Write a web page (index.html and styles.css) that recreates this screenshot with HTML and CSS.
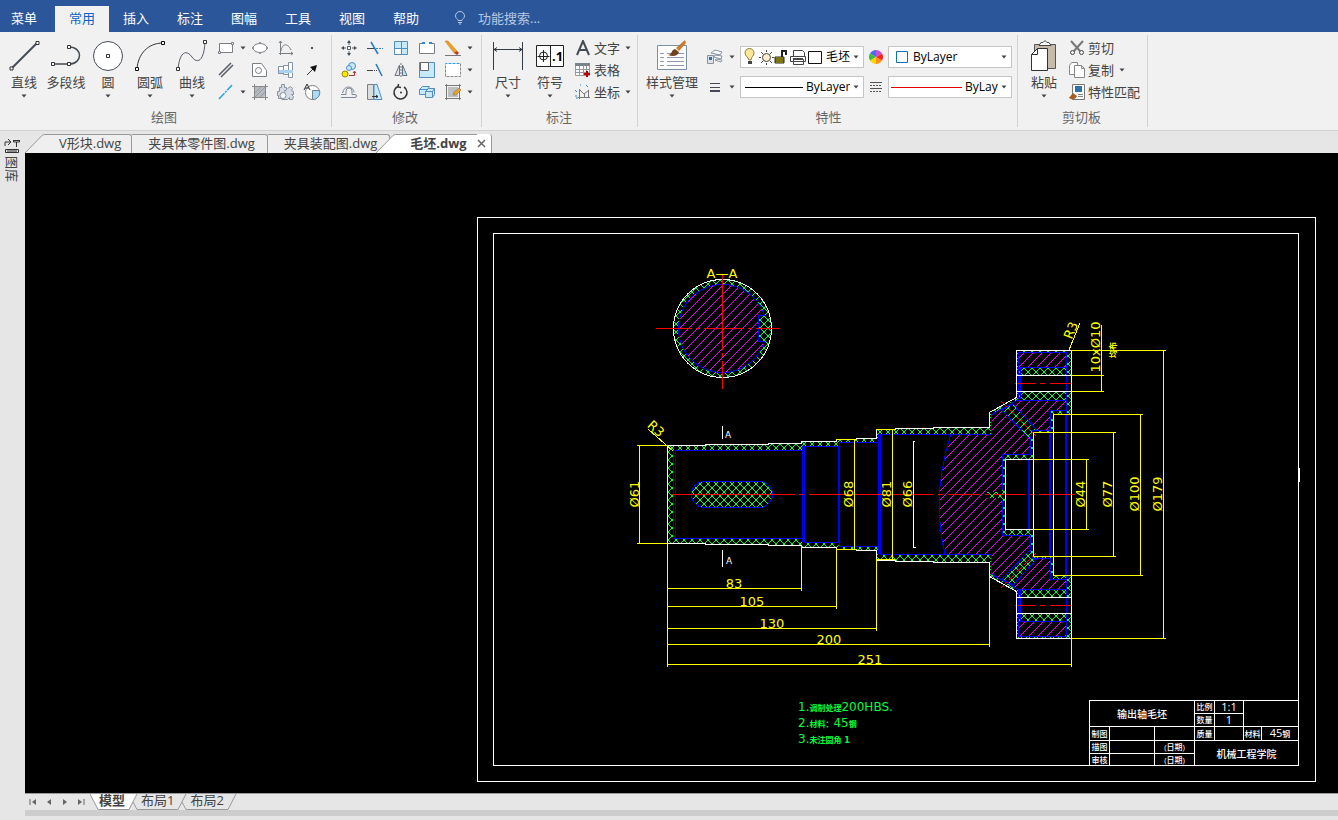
FILE: index.html
```html
<!DOCTYPE html>
<html lang="zh-CN">
<head>
    <meta charset="UTF-8">
    <meta name="viewport" content="width=device-width, initial-scale=1.0">
    <title>毛坯.dwg</title>
    <link rel="stylesheet" href="styles.css">
</head>
<body>
    <svg class="defs" aria-hidden="true">
        <symbol id="arrow" viewBox="0 0 6 4"><path d="M0.5 0.5h5L3 3.5z" fill="#444"/></symbol>
        <symbol id="slant" viewBox="0 0 20 19"><path d="M0 19L17 1.500Q18 0.500 20 0.500V19z" fill="currentColor"/><path d="M0 19L17 1.500Q18 0.500 20 0.500" fill="none" stroke="#999"/></symbol>
    </svg>

    <header class="menu-bar">
        <nav class="menu-tabs">
            <button class="menu-main">菜单</button>
            <button class="active">常用</button>
            <button>插入</button>
            <button>标注</button>
            <button>图幅</button>
            <button>工具</button>
            <button>视图</button>
            <button>帮助</button>
        </nav>
        <label class="search">
            <svg width="12" height="14" viewBox="0 0 12 14" fill="none" stroke="#b9c8e2"><path d="M4 9.500C4 8 1.500 7.500 1.500 5a4.500 4.500 0 0 1 9 0C10.500 7.500 8 8 8 9.500zM4 11.500h4M5 13h2"/></svg>
            <input type="text" placeholder="功能搜索..." aria-label="功能搜索">
        </label>
    </header>

    <div class="ribbon">
        <section class="group group-draw">
            <div class="group-body">
                <button class="big"><svg width="32" height="32" viewBox="0 0 32 32"><path d="M4 28L29 3" stroke="#444b57" stroke-width="2"/><path d="M2 27h3v3h-3zM28 1.500h3v3h-3z" fill="#fff" stroke="#333"/></svg>直线<svg class="drop"><use href="#arrow"/></svg></button>
                <button class="big"><svg width="32" height="32" viewBox="0 0 32 32" fill="none" stroke="#444b57"><path d="M3 24h16M19 7c14 0 14 17 0 17" stroke-width="1.500"/><path d="M1.500 22.500h3v3h-3zM17.500 22.500h3v3h-3zM17.500 5.500h3v3h-3z" fill="#fff" stroke="#333"/></svg>多段线</button>
                <button class="big"><svg width="32" height="32" viewBox="0 0 32 32"><circle cx="16" cy="16" r="14.500" fill="#fff" stroke="#444b57"/><path d="M14.500 14.500h3v3h-3z" fill="#fff" stroke="#333"/></svg>圆<svg class="drop"><use href="#arrow"/></svg></button>
                <button class="big"><svg width="32" height="32" viewBox="0 0 32 32"><path d="M3 29C4 14 14 3 29 3" fill="none" stroke="#333"/><path d="M1.500 27.500h3v3h-3zM27.500 1.500h3v3h-3z" fill="#fff" stroke="#111"/></svg>圆弧<svg class="drop"><use href="#arrow"/></svg></button>
                <button class="big"><svg width="32" height="32" viewBox="0 0 32 32"><path d="M2 29C4 10 11 10 16 17S28 22 29 2" fill="none" stroke="#555c68"/><path d="M0.500 27.500h3v3h-3zM27.500 0.500h3v3h-3z" fill="#fff" stroke="#333"/></svg>曲线<svg class="drop"><use href="#arrow"/></svg></button>
                <div class="tools tools-draw">
                    <button aria-label="矩形"><svg width="18" height="18" viewBox="0 0 18 18" fill="#fff" stroke="#7a7f86"><path d="M2.500 4.500h13v9h-13z"/><path d="M1.500 12.500h2v2h-2zM14.500 3.500h2v2h-2z"/></svg></button>
                    <button aria-label="矩形选项"><svg class="drop"><use href="#arrow"/></svg></button>
                    <button aria-label="椭圆"><svg width="18" height="18" viewBox="0 0 18 18" fill="#fff" stroke="#7a7f86"><ellipse cx="9" cy="9" rx="7" ry="4.500"/><path d="M8.500 3.500h1v1h-1zM8.500 13.500h1v1h-1zM1.500 8.500h1v1h-1zM15.500 8.500h1v1h-1z"/></svg></button>
                    <button aria-label="公式曲线"><svg width="18" height="18" viewBox="0 0 18 18" fill="none" stroke="#7a7f86"><path d="M3.500 2v14M2 14.500h14M2 4l1.500-2L5 4M14 13l2 1.500-2 1.500M4 12C5 5 10 3 14 11"/></svg></button>
                    <button aria-label="点"><svg width="18" height="18" viewBox="0 0 18 18"><path d="M8 8h2v2h-2z" fill="#555"/></svg></button>
                    <button aria-label="平行线"><svg width="18" height="18" viewBox="0 0 18 18" stroke="#555c68" stroke-width="1.500"><path d="M2 14L14 2M4 16L16 4"/></svg></button>
                    <span></span>
                    <button aria-label="多边形孔"><svg width="18" height="18" viewBox="0 0 18 18" fill="#fff" stroke="#7a7f86"><path d="M1.500 2.500h9l5 7v6h-14z"/><circle cx="7.500" cy="9.500" r="3"/></svg></button>
                    <button aria-label="轴"><svg width="18" height="18" viewBox="0 0 18 18" stroke="#8492a5"><path d="M1.500 5.500h5v7h-5zM6.500 4.500h5v9h-5zM11.500 1.500h4v15h-4z" fill="#fff"/><path d="M2 9h14v3h-14z" fill="#a8d0f0" stroke="none"/></svg></button>
                    <button aria-label="箭头"><svg width="18" height="18" viewBox="0 0 18 18"><path d="M4 14L10 8" stroke="#333"/><path d="M14 4L12 11 7 6z" fill="#111"/></svg></button>
                    <button aria-label="中心线"><svg width="18" height="18" viewBox="0 0 18 18"><path d="M2 16L15 2" stroke="#23a5e0" stroke-width="1.500" stroke-dasharray="8 1 2 1"/></svg></button>
                    <button aria-label="中心线选项"><svg class="drop"><use href="#arrow"/></svg></button>
                    <button aria-label="剖面线"><svg width="18" height="18" viewBox="0 0 18 18"><path d="M3 3h12v9l-3 3H3z" fill="#b6bbc1"/><path d="M1 3.500h16M1 14.500h16M3.500 1v16M14.500 1v16" fill="none" stroke="#888"/><path d="M4 10l6-6M4 14L14 4M9 14l5-5" stroke="#969ba1"/></svg></button>
                    <button aria-label="齿轮"><svg width="18" height="18" viewBox="0 0 18 18" fill="#d5dae4" stroke="#8a92a1"><path d="M2.500 4.500h2v-3h3v3h2v3h-2l1 3-3 5h-4v-3h-1v-4h2z"/><path d="M10.500 5.500l3-2 2 2-1 2 2 1v3h-2l2 2-1 3h-3v-2l-2 2h-6"/><circle cx="6" cy="12.500" r="3" fill="#fff"/></svg></button>
                    <button aria-label="局部放大"><svg width="18" height="18" viewBox="0 0 18 18" stroke="#7a7f86"><circle cx="9.500" cy="9.500" r="7" fill="#fff"/><path d="M9.500 7.500h7a7 7 0 0 1-7 9z" fill="#a5dcf7"/><path d="M1 7l3-6 3 6M2 5h4" fill="none" stroke="#333"/></svg></button>
                </div>
            </div>
            <h2>绘图</h2>
        </section>

        <section class="group group-modify">
            <div class="group-body">
                <div class="tools tools-modify">
                    <button aria-label="平移"><svg width="18" height="18" viewBox="0 0 18 18" fill="none" stroke="#555c68"><path d="M7.500 7.500h3v3h-3z"/><path d="M9 3v3M9 12v3M3 9h3M12 9h3"/><path d="M7 4l2-3 2 3zM7 14l2 3 2-3zM4 7L1 9l3 2zM14 7l3 2-3 2z" fill="#444b57" stroke="none"/></svg></button>
                    <button aria-label="裁剪"><svg width="18" height="18" viewBox="0 0 18 18"><path d="M1 9.500h8" stroke="#444"/><path d="M10 9.500h7" stroke="#2f86d6" stroke-dasharray="2 1"/><path d="M5 3L12 15" stroke="#2878c8" stroke-width="1.500"/></svg></button>
                    <button aria-label="阵列"><svg width="18" height="18" viewBox="0 0 18 18" fill="#c6e9fb" stroke="#568dbd"><path d="M2.500 2.500h13v13h-13zM9.500 2.500v13M2.500 9.500h13"/><path d="M3 10h6v5H3z" fill="#fff" stroke="none"/></svg></button>
                    <button aria-label="打断"><svg width="18" height="18" viewBox="0 0 18 18" fill="#fff" stroke="#7a7f86"><path d="M6 4.500H1.500v10h15v-10H12"/><path d="M4 4h3M11 4h3" stroke="#2f86d6" stroke-width="2"/></svg></button>
                    <button aria-label="删除"><svg width="18" height="18" viewBox="0 0 18 18"><path d="M1 2l3 0 9 10-3 2z" fill="#f0a020" stroke="#b87b1a" stroke-width=".5"/><path d="M10 14l3-2 2 2-2 2z" fill="#b53b28"/><path d="M1 16.500h16" stroke="#777"/></svg></button>
                    <button aria-label="删除选项"><svg class="drop"><use href="#arrow"/></svg></button>
                    <button aria-label="平移复制"><svg width="18" height="18" viewBox="0 0 18 18"><circle cx="5" cy="13" r="3" fill="#ffe800" stroke="#a08a00"/><circle cx="12" cy="5" r="3.500" fill="#c6e9fb" stroke="#568dbd"/><circle cx="9" cy="7" r="2.500" fill="#c6e9fb" stroke="#568dbd"/><path d="M9 14.500h5.500V11M13 12l1.500-2 1.500 2" fill="none" stroke="#b0352c"/></svg></button>
                    <button aria-label="延伸"><svg width="18" height="18" viewBox="0 0 18 18"><path d="M1 9.500h6" stroke="#444"/><path d="M8 9.500h4" stroke="#444" stroke-dasharray="1 1"/><path d="M10 3L16 15" stroke="#2878c8" stroke-width="1.500"/></svg></button>
                    <button aria-label="镜像"><svg width="18" height="18" viewBox="0 0 18 18" stroke="#6a737e"><path d="M7.500 4v10.500H3z" fill="#e2e4e8"/><path d="M10.500 4v10.500H15z" fill="#b5e1f7"/><path d="M9 2v15" stroke-dasharray="2 1"/></svg></button>
                    <button aria-label="缩放"><svg width="18" height="18" viewBox="0 0 18 18" stroke="#568dbd"><path d="M1.500 1.500h15v15h-15z" fill="#c6e9fb"/><path d="M2.500 1.500h8v8h-8z" fill="#fff" stroke="#666"/></svg></button>
                    <button aria-label="拉伸"><svg width="18" height="18" viewBox="0 0 18 18"><path d="M1.500 2.500h15v13h-15z" fill="#fff" stroke="#fff"/><path d="M16.500 2.500v13H1.500" fill="none" stroke="#888" stroke-dasharray="3 1"/><path d="M1.500 15.500V2.500h15" fill="none" stroke="#2f9be0" stroke-dasharray="3 1"/></svg></button>
                    <button aria-label="拉伸选项"><svg class="drop"><use href="#arrow"/></svg></button>
                    <button aria-label="等距"><svg width="18" height="18" viewBox="0 0 18 18" fill="none" stroke="#7c8896"><path d="M1 11.500h5V8a1 1 0 0 1 6 0v3.500h3a1 1 0 0 1 0 3H1M2 9.500h1a5 5 0 1 1 11 0"/></svg></button>
                    <button aria-label="倒角"><svg width="18" height="18" viewBox="0 0 18 18"><path d="M1.500 1.500h6v15h-6z" fill="#ddd" stroke="#7a7f86"/><path d="M8 1.500h3l5 15H8z" fill="#c6e9fb" stroke="#568dbd"/><path d="M6 13.500h6M10 12l2 1.500-2 1.500" fill="none" stroke="#333"/></svg></button>
                    <button aria-label="旋转"><svg width="18" height="18" viewBox="0 0 18 18"><path d="M6 3.500A6.500 6.500 0 1 0 12 4M6.500 1l-.5 3 3 .5" fill="none" stroke="#333" stroke-width="1.500"/><circle cx="9" cy="9.500" r="1" fill="#333"/></svg></button>
                    <button aria-label="块"><svg width="18" height="18" viewBox="0 0 18 18" fill="#c6e9fb" stroke="#568dbd"><path d="M1.500 6.500l3-3h7l-2 3v5h-8zM9.500 6.500h-8"/><path d="M7.500 8.500l3-3h6v6l-2 3h-7zM7.500 8.500h7v6M14.500 8.500l2-3"/></svg></button>
                    <button aria-label="填充编辑"><svg width="18" height="18" viewBox="0 0 18 18"><path d="M4 4h10v10H4z" fill="#bbc0c5"/><path d="M1 2.500h16M1 15.500h16M2.500 1v16M15.500 1v16" stroke="#777"/><path d="M9 12l1-3 5-4 2 2-5 5z" fill="#e5a235" stroke="#94651d" stroke-width=".5"/></svg></button>
                    <button aria-label="填充选项"><svg class="drop"><use href="#arrow"/></svg></button>
                </div>
            </div>
            <h2>修改</h2>
        </section>

        <section class="group group-dim">
            <div class="group-body">
                <button class="big"><svg width="32" height="32" viewBox="0 0 32 32" stroke="#333b46" fill="none"><path d="M1.500 2v28M30.500 2v28M2 9.500h28M5 7.500L2 9.500l3 2M27 7.500l3 2-3 2"/></svg>尺寸<svg class="drop"><use href="#arrow"/></svg></button>
                <button class="big"><svg width="32" height="32" viewBox="0 0 32 32"><path d="M2.500 5.500h27v21h-27zM16.500 5.500v21" fill="#fff" stroke="#222"/><circle cx="9.500" cy="16" r="4" fill="none" stroke="#222"/><path d="M9.500 10v12M3.500 16.500h12" stroke="#222"/><text x="18" y="21" class="icon-text">.1</text></svg>符号<svg class="drop"><use href="#arrow"/></svg></button>
                <div class="list">
                    <button><svg width="16" height="16" viewBox="0 0 16 16"><path d="M2 15L8 1l6 14M4 10h8" fill="none" stroke="#444b57" stroke-width="2"/></svg>文字<svg class="drop"><use href="#arrow"/></svg></button>
                    <button><svg width="16" height="16" viewBox="0 0 16 16"><path d="M0.500 1.500h14v12h-14zM0.500 7.500h14M0.500 10.500h14M4.500 4v9M8.500 4v9M11.500 4v9" fill="#fff" stroke="#999"/><path d="M0 1h15v3H0z" fill="#7b838d"/><path d="M12 9v6M9 12h6" stroke="#c00000" stroke-width="2"/></svg>表格</button>
                    <button><svg width="16" height="16" viewBox="0 0 16 16" fill="none" stroke="#777"><path d="M4.500 5v10M3 13.500h12M5 6l4 4 5-4M9.500 10v4M13.500 6v8"/><path d="M5 1h1M11 1l2 2M0 6l2 2M0 12h2M1 14h2" stroke="#2f86d6"/></svg>坐标<svg class="drop"><use href="#arrow"/></svg></button>
                </div>
            </div>
            <h2>标注</h2>
        </section>

        <section class="group group-props">
            <div class="group-body">
                <button class="big wide"><svg width="32" height="32" viewBox="0 0 32 32"><path d="M1.500 5.500h29v24h-29z" fill="#fff" stroke="#7891a3"/><path d="M4 13.500h4M4 17.500h4M4 21.500h4M4 25.500h4M11 13.500h17M11 17.500h17M11 21.500h17M11 25.500h17" stroke="#8c99b0"/><path d="M20 8l9-8 1 3-7 8z" fill="#c97a2b"/><path d="M12 15c4 0 3-5 7-6l4 3c-1 4-6 5-11 3z" fill="#74421c"/></svg>样式管理<svg class="drop"><use href="#arrow"/></svg></button>
                <div class="props">
                    <button aria-label="图层"><svg width="16" height="18" viewBox="0 0 16 18" stroke="#8794a2"><path d="M4 5l4-3 7 2-2 3zM7 9l1-2 7 1-1 3zM8 12l1-1 6 1-1 2z" fill="#fff"/><path d="M0.500 7.500h6v8h-6z" fill="#dce1e7"/><path d="M2 9h3v3H2z" fill="#2d6fa8" stroke="none"/></svg></button>
                    <button aria-label="图层选项"><svg class="drop"><use href="#arrow"/></svg></button>
                    <div class="combo">
                        <svg width="80" height="18" viewBox="0 0 80 18" stroke="#444">
                            <path d="M6 12C5 9 2 8 2 5a4 4 0 0 1 9 0c0 3-3 4-3 7z" fill="#ffe79a" stroke="#8f7c38"/><path d="M5 13h4v3H5z" fill="#444" stroke="none"/>
                            <circle cx="23.500" cy="9.500" r="4" fill="#fff0d0"/><path d="M23.500 2v2M23.500 15v2M16 9.500h2M29 9.500h2M18 4l2 2M27 13l2 2M18 15l2-2M27 6l2-2"/>
                            <path d="M32 9h9v6h-9z" fill="#d7c900" stroke="#222"/><path d="M32 11h9M32 13h9" stroke="#222"/><path d="M39 9V3h4v4" fill="none" stroke="#222" stroke-width="2"/>
                            <path d="M50.500 8V2.500h9l2 2V8M47.500 8.500h15v5h-15zM50.500 11.500h10v5h-10z" fill="#fff"/><path d="M50 11h10" stroke-width="2"/>
                            <path d="M65.500 3.500h13v12h-13z" fill="#fff" stroke="#111"/>
                        </svg>
                        <select class="cut" aria-label="当前图层"><option>毛坯</option></select>
                        <svg class="drop"><use href="#arrow"/></svg>
                    </div>
                    <button aria-label="颜色"><svg width="14" height="14" viewBox="0 0 14 14"><path d="M7 7V0a7 7 0 0 1 6 3.500z" fill="#c850d8"/><path d="M7 7l6-3.500a7 7 0 0 1 0 7z" fill="#ff2020"/><path d="M7 7l6 3.500A7 7 0 0 1 7 14z" fill="#ff9018"/><path d="M7 7v7a7 7 0 0 1-6-3.500z" fill="#ffd700"/><path d="M7 7l-6 3.500a7 7 0 0 1 0-7z" fill="#3dbb3d"/><path d="M7 7L1 3.500A7 7 0 0 1 7 0z" fill="#4b6ee8"/></svg></button>
                    <div class="combo">
                        <svg width="19" height="14" viewBox="0 0 19 14"><path d="M5.500 1.500h11v11h-11z" fill="#fff" stroke="#0a70c8"/></svg>
                        <select aria-label="颜色"><option>ByLayer</option></select>
                        <svg class="drop"><use href="#arrow"/></svg>
                    </div>
                    <button aria-label="线宽"><svg width="16" height="14" viewBox="0 0 16 14" stroke="#444b57"><path d="M3 3.500h10M3 7.500h10" /><path d="M3 11h10" stroke-width="2"/></svg></button>
                    <button aria-label="线宽选项"><svg class="drop"><use href="#arrow"/></svg></button>
                    <div class="combo">
                        <svg width="60" height="14" viewBox="0 0 60 14"><path d="M2 7.500h58" stroke="#000"/></svg>
                        <select aria-label="线宽"><option>ByLayer</option></select>
                        <svg class="drop"><use href="#arrow"/></svg>
                    </div>
                    <button aria-label="线型"><svg width="14" height="14" viewBox="0 0 14 14" stroke="#555"><path d="M1 2.500h12M1 8.500h12"/><path d="M1 5.500h12M1 11.500h12" stroke-dasharray="2 1"/></svg></button>
                    <div class="combo">
                        <svg width="71" height="14" viewBox="0 0 71 14"><path d="M0 7.500h71" stroke="#e00000"/></svg>
                        <select class="cut" aria-label="线型"><option>ByLayer</option></select>
                        <svg class="drop"><use href="#arrow"/></svg>
                    </div>
                </div>
            </div>
            <h2>特性</h2>
        </section>

        <section class="group group-clip">
            <div class="group-body">
                <button class="big"><svg width="32" height="32" viewBox="0 0 32 32"><path d="M6.500 4.500h21v24h-21z" fill="#c6bbaa" stroke="#555"/><path d="M11 5.500h12l-2-3h-2l-2-2-2 2h-2z" fill="#fff" stroke="#444"/><path d="M3.500 14.500l6-6h10v22h-16z" fill="#fff" stroke="#333"/><path d="M3.500 14.500h6v-6" fill="none" stroke="#333"/></svg>粘贴<svg class="drop"><use href="#arrow"/></svg></button>
                <div class="list">
                    <button><svg width="16" height="16" viewBox="0 0 16 16" fill="none"><path d="M2 1l9 10M14 1L5 11" stroke="#777" stroke-width="2"/><circle cx="3.500" cy="12.500" r="2" stroke="#444"/><circle cx="12.500" cy="12.500" r="2" stroke="#444"/></svg>剪切</button>
                    <button><svg width="16" height="16" viewBox="0 0 16 16" fill="#fff" stroke="#888"><path d="M0.500 3.500l2-3h6v12h-8z"/><path d="M5.500 3.500h7l3 3v9h-10zM12.500 3.500v3h3"/></svg>复制<svg class="drop"><use href="#arrow"/></svg></button>
                    <button><svg width="16" height="16" viewBox="0 0 16 16"><path d="M3.500 0.500h12v15h-12z" fill="#fff" stroke="#777"/><path d="M6 2h7v6H6z" fill="#2f73ad"/><path d="M9 10.500h5M9 12.500h5" stroke="#888"/><path d="M0 14l4-5 4 3c-2 4-5 4-8 2z" fill="#a65b20"/></svg>特性匹配</button>
                </div>
            </div>
            <h2>剪切板</h2>
        </section>
    </div>

    <div class="workspace">
        <aside class="side">
            <button class="side-tab"><svg width="16" height="16" viewBox="0 0 16 16" fill="none" stroke="#333"><path d="M1 8V4h5M4 1l3 3-3 3M9.500 2.500h6M9.500 2v2h6V2M12.500 4v5M1.500 11.500h13v3h-13zM3 13h10"/></svg><span>图库</span></button>
        </aside>
        <div class="main">
            <nav class="doc-tabs">
                <button class="slanted"><svg width="20" height="19"><use href="#slant"/></svg><span class="doc-name short">V形块.dwg</span></button>
                <button><span class="doc-name">夹具体零件图.dwg</span></button>
                <button><span class="doc-name">夹具装配图.dwg</span></button>
                <button class="slanted current"><svg width="20" height="19"><use href="#slant"/></svg><span class="doc-name short">毛坯.dwg</span><svg class="close" width="9" height="9" viewBox="0 0 9 9"><path d="M1 1l7 7M8 1L1 8" stroke="#666" stroke-width="1.500"/></svg></button>
            </nav>

            <main class="canvas">
                <svg class="drawing" viewBox="25 153 1313 640" role="img" aria-label="输出轴毛坯">
                    <defs>
                        <pattern id="steel" width="9" height="9" patternUnits="userSpaceOnUse"><path d="M-1 10L10 -1M-1 1L1 -1M8 10L10 8" stroke="#f0f"/></pattern>
                        <pattern id="stock" width="8" height="8" patternUnits="userSpaceOnUse"><path d="M-1 9L9 -1M-1 -1L9 9" stroke="#00ff3c"/></pattern>
                    </defs>

                    <!-- sheet frame -->
                    <g class="white">
                        <path d="M477.500 217.500h838v564h-838zM493.500 233.500h805v532h-805z"/>
                        <path d="M1299.500 468v14"/>
                    </g>

                    <!-- section A-A -->
                    <circle cx="722.500" cy="328.500" r="49" fill="url(#stock)"/>
                    <path class="cover" d="M764.500 315.500A44 44 0 1 0 764.500 341.500H758.500V315.500z"/>
                    <path class="blue" fill="url(#steel)" d="M764.500 315.500A44 44 0 1 0 764.500 341.500H758.500V315.500z"/>
                    <circle class="white" cx="722.500" cy="328.500" r="49"/>
                    <path class="red" d="M656 328.500h36M696 328.500h4M704 328.500h40M748 328.500h4M756 328.500h24M722.500 275v75M722.500 353v4M722.500 361v28"/>

                    <!-- blank: stock allowance, then the finished part over it -->
                    <path fill="url(#stock)" d="M667 445H705V444H768V443H801V441H836V439H856V438H876V429H895V428H933V427H989V412L1017 397V350H1071V638H1017V592L989 577V562H933V561H895V560H876V550H856V549H836V547H801V545H768V544H705V543H667z"/>
                    <path class="cover" d="M673 450H803V446H839V442H879V434H991V415L1018 400H1066V410H1050V430H1030V454H1002V535H1030V558H1050V579H1066V589H1018L991 574V554H879V546H839V542H803V538H673zM1018 352H1066V367H1018zM1018 621H1066V636H1018z"/>
                    <path class="blue" fill="url(#steel)" d="M951 434H991V415L1018 400H1066V410H1050V430H1030V454H1002V535H1030V558H1050V579H1066V589H1018L991 574V554H945Q931 495 951 434zM1018 352H1066V367H1018zM1018 621H1066V636H1018z"/>
                    <path class="cover" d="M1017 375H1071V391H1017zM1017 597H1071V613H1017zM1005 459H1033V432H1053V414H1071V575H1053V556H1033V529H1005z"/>
                    <path class="cover" d="M1002 410L1013 404L1037 430H1033L1030 439zM1002 579L1013 585L1037 559H1033L1030 550z"/>
                    <path class="blue" fill="url(#stock)" d="M1002 410L1013 404L1037 430H1033L1030 439zM1002 579L1013 585L1037 559H1033L1030 550z"/>
                    <path class="cover" d="M987 492h13l3-3v12l-3-3h-13z"/>
                    <path fill="url(#stock)" d="M987 492h13l3-3v12l-3-3h-13z"/>
                    <path class="blue" d="M673.500 450.500H802.500V538.500H673.500zM675.500 450v88M804.500 446.500H838.500V542.500H804.500zM802.500 446v96M839.500 442.500H878.500V546.500H839.500zM951 434.500H880.500V554.500H946M878.500 434v120M1018.500 352v47M1018.500 589v47M1020.500 367v32M1020.500 589v32M1066.500 352v62M1066.500 575v61"/>
                    <path class="blue thick" d="M1029 459v70M1050 432v124M1066 414v161"/>
                    <rect x="691.500" y="481.500" width="81" height="26" rx="13" class="blue" fill="url(#stock)"/>
                    <path class="red" d="M671 494.500h124M799 494.500h5M809 494.500h124M938 494.500h5M948 494.500h31M985 494.500h4M994 494.500h31M1030 494.500h5M1039 494.500h36M1015 383.500h21M1040 383.500h5M1050 383.500h21M1015 605.500h21M1040 605.500h5M1050 605.500h21"/>
                    <path class="red" stroke-dasharray="8 3" d="M1001 401L1036 436M1001 588L1036 553"/>
                    <path class="white" d="M667.500 543V445.500H705.500V444.500H768.500V443.500H801.500V441.500H836.500V439.500H856.500V438.500H876.500V429.500H895.500V428.500H933.500V427.500H989.500V412.500L1016.500 397.500V350.500H1071.500V638.500H1016.500V591.500L989.500 576.500V562.500H933.500V561.500H895.500V560.500H876.500V550.500H856.500V549.500H836.500V547.500H801.500V545.500H768.500V544.500H705.500V543.500H667.500"/>
                    <path class="white" d="M1017 375.500H1071M1017 391.500H1071M1017 597.500H1071M1017 613.500H1071M1071 414.500H1053.500V575.500H1071M1053 432.500H1033.500V556.500H1053M1033 459.500H1005.500V529.500H1033M722.500 426v13M722.500 550v17"/>

                    <!-- dimension lines -->
                    <path class="yellow" d="M637 445.500h31M637 543.500h31M639.500 445v98M667.500 543v124M667 588.500h134M801.500 545v46M667 606.500h169M836.500 549v60M667 628.500h209M876.500 560v71M667 644.500h322M989.500 577v70M667 664.500h404M1071.500 638v29"/>
                    <path class="yellow" d="M836 439.500h21M836 549.500h21M854.500 439v110M876 429.500h19M876 559.500h19M892.500 429v130"/>
                    <path class="white" d="M915 441.500h-1.500v106h2"/>
                    <path class="yellow" d="M1033 459.500h56M1033 529.500h56M1086.500 459v70M1033 432.500h83M1033 556.500h83M1113.500 432v124M1053 414.500h90M1053 575.500h90M1140.500 414v161M1071 350.500h95M1071 638.500h95M1163.500 350v288M1071 375.500h33M1071 391.500h33M1101.500 325v66M648 429L673 451M1080 323L1069 350"/>

                    <g class="label">
                        <text x="722" y="278">A—A</text>
                        <text x="734" y="588">83</text>
                        <text x="752" y="606">105</text>
                        <text x="772" y="628">130</text>
                        <text x="829" y="644">200</text>
                        <text x="870" y="664">251</text>
                        <text transform="translate(639 494) rotate(-90)">Ø61</text>
                        <text transform="translate(853 494) rotate(-90)">Ø68</text>
                        <text transform="translate(891 494) rotate(-90)">Ø81</text>
                        <text transform="translate(912 494) rotate(-90)">Ø66</text>
                        <text transform="translate(1085 494) rotate(-90)">Ø44</text>
                        <text transform="translate(1112 494) rotate(-90)">Ø77</text>
                        <text transform="translate(1139 494) rotate(-90)">Ø100</text>
                        <text transform="translate(1162 494) rotate(-90)">Ø179</text>
                        <text transform="translate(1100 347) rotate(-90)">10xØ10</text>
                        <text class="tiny" transform="translate(1116 350) rotate(-90)">均布</text>
                        <text transform="translate(653 432) rotate(42)">R3</text>
                        <text transform="translate(1075 332) rotate(-68)">R3</text>
                    </g>
                    <g class="mark">
                        <text x="725" y="438">A</text>
                        <text x="726" y="564">A</text>
                    </g>
                    <g class="notes">
                        <text x="798" y="711">1.<tspan class="tiny">调制处理</tspan>200HBS.</text>
                        <text x="798" y="727">2.<tspan class="tiny">材料：</tspan>45<tspan class="tiny">钢</tspan></text>
                        <text x="798" y="743">3.<tspan class="tiny">未注圆角 1</tspan></text>
                    </g>

                    <foreignObject x="1089" y="700" width="210" height="66">
                        <table class="title-block">
                            <colgroup><col class="c20"><col class="c45"><col class="c40"><col class="c20"><col class="c29"><col class="c18"><col class="c37"></colgroup>
                            <tr><td colspan="3" rowspan="2" class="name">输出轴毛坯</td><td>比例</td><td class="num">1:1</td><td colspan="2" rowspan="2"></td></tr>
                            <tr><td>数量</td><td class="num">1</td></tr>
                            <tr><td>制图</td><td></td><td></td><td>质量</td><td></td><td>材料</td><td><span class="num">45</span>钢</td></tr>
                            <tr><td>描图</td><td></td><td>(日期)</td><td colspan="4" rowspan="2" class="name">机械工程学院</td></tr>
                            <tr><td>审核</td><td></td><td>(日期)</td></tr>
                        </table>
                    </foreignObject>
                </svg>
            </main>

            <nav class="sheet-tabs">
                <button class="step" aria-label="第一个"><svg width="8" height="8" viewBox="0 0 8 8"><path d="M1 1v6" stroke="#666"/><path d="M7 1v6L3 4z" fill="#666"/></svg></button>
                <button class="step" aria-label="上一个"><svg width="8" height="8" viewBox="0 0 8 8"><path d="M6 1v6L2 4z" fill="#666"/></svg></button>
                <button class="step" aria-label="下一个"><svg width="8" height="8" viewBox="0 0 8 8"><path d="M2 1v6l4-3z" fill="#666"/></svg></button>
                <button class="step" aria-label="最后一个"><svg width="8" height="8" viewBox="0 0 8 8"><path d="M7 1v6" stroke="#666"/><path d="M1 1v6l4-3z" fill="#666"/></svg></button>
                <svg class="edge" width="9" height="16" viewBox="0 0 9 16"><path d="M0 0l8 15.500h1V0z" fill="#fff"/><path d="M0 0l8 15.500h1" fill="none" stroke="#999"/></svg>
                <button class="sheet current">模型</button>
                <svg width="10" height="16" viewBox="0 0 10 16"><path d="M0 0h9L1 15.500H0z" fill="#fff"/><path d="M9 0L1 15.500H0M5 8l4 7.500h1" fill="none" stroke="#999"/></svg>
                <button class="sheet">布局1</button>
                <svg width="10" height="16" viewBox="0 0 10 16"><path d="M9 0L1 15.500H0M5 8l4 7.500h1" fill="none" stroke="#999"/></svg>
                <button class="sheet">布局2</button>
                <svg width="10" height="16" viewBox="0 0 10 16"><path d="M9 0L1 15.500H0" fill="none" stroke="#999"/></svg>
            </nav>
            <div class="command-edge"></div>
        </div>
    </div>
</body>
</html>
```
FILE: styles.css
```css
:root {
    --blue: #2b579a;
    --ribbon: #f1f1f1;
    --panel: #e6e6e6;
    --line: #d2d2d2;
    --text: #444;
}

* {
    margin: 0;
    padding: 0;
    box-sizing: border-box;
}

body {
    display: flex;
    flex-direction: column;
    height: 100vh;
    overflow: hidden;
    background-color: var(--panel);
    color: var(--text);
    font-family: "Open Sans", "Noto Sans CJK SC", sans-serif;
    font-size: 13px;
    line-height: 20px;
}

button, input, select {
    border: none;
    background: none;
    color: inherit;
    font: inherit;
}

button {
    white-space: nowrap;
}

svg {
    display: block;
    flex: none;
}

.defs {
    position: absolute;
    width: 0;
    height: 0;
}

.drop {
    width: 6px;
    height: 4px;
}

/* menu */
.menu-bar {
    display: flex;
    flex: none;
    height: 32px;
    padding-top: 6px;
    background-color: var(--blue);
    color: #fff;
}

.menu-tabs {
    display: flex;
}

.menu-tabs button {
    width: 54px;
    padding-bottom: 3px;
}

.menu-tabs .menu-main {
    width: 48px;
    margin-right: 7px;
}

.menu-tabs .active {
    background-color: var(--ribbon);
    color: #0a64c8;
}

.search {
    display: flex;
    align-items: center;
    gap: 12px;
    margin-left: 21px;
    padding-bottom: 2px;
}

.search input {
    width: 120px;
}

.search input::placeholder {
    color: #b9c8e2;
    opacity: 1;
}

/* ribbon */
.ribbon {
    display: flex;
    flex: none;
    height: 99px;
    padding: 3px 0;
    background-color: var(--ribbon);
    border-bottom: 1px solid var(--line);
}

.group {
    display: flex;
    flex-direction: column;
    justify-content: space-between;
    padding: 2px 6px 0 4px;
    border-right: 1px solid var(--line);
}

.group-draw {
    padding-left: 3px;
}

.group-modify {
    padding-right: 7px;
}

.group-dim {
    padding-left: 5px;
}

.group-clip {
    padding: 2px 7px 0 5px;
}

.group-props {
    padding: 2px 5px 0 7px;
}

.group-body {
    display: flex;
    height: 66px;
}

.group h2 {
    color: #666;
    font-size: 13px;
    font-weight: 400;
    line-height: 20px;
    text-align: center;
}

.big {
    display: flex;
    flex-direction: column;
    align-items: center;
    width: 42px;
    padding-top: 3px;
}

.big .drop {
    margin-top: 2px;
}

.wide {
    width: 54px;
}

.icon-text {
    font: 700 13px "Open Sans", sans-serif;
}

.tools {
    display: grid;
    grid-auto-rows: 22px;
}

.tools-draw {
    grid-template-columns: 26px 8px 26px 26px 26px;
}

.tools-modify {
    grid-template-columns: repeat(5, 26px) 8px;
}

.tools button, .props button {
    display: flex;
    align-items: center;
    justify-content: center;
}

.list {
    margin-left: 4px;
}

.list button {
    display: flex;
    align-items: center;
    gap: 3px;
    height: 22px;
    padding-bottom: 1px;
}

.list .drop {
    margin-left: 2px;
}

.props {
    display: grid;
    grid-template-columns: 18px 16px 124px 24px 124px;
    grid-template-rows: 22px 22px;
    gap: 8px 0;
    margin-left: 7px;
    padding-top: 9px;
}

.combo {
    display: flex;
    align-items: center;
    gap: 3px;
    padding: 0 4px 0 2px;
    background-color: #fff;
    border: 1px solid #c6c6c6;
    color: #000;
}

.combo select {
    flex: 1;
    min-width: 0;
    overflow: hidden;
    appearance: none;
    font-size: 12px;
}

.combo .cut {
    text-overflow: clip;
}

/* workspace */
.workspace {
    display: flex;
    flex: 1;
    min-height: 0;
}

.side {
    width: 25px;
    padding: 7px 4px;
}

.side-tab {
    display: flex;
    flex-direction: column;
    gap: 2px;
    align-items: center;
}

.side-tab span {
    line-height: 16px;
    writing-mode: vertical-rl;
    text-orientation: sideways;
}

.main {
    display: flex;
    flex: 1;
    flex-direction: column;
    min-width: 0;
}

.doc-tabs {
    display: flex;
    flex: none;
    height: 22px;
    padding-top: 3px;
}

.doc-tabs button {
    display: flex;
    align-items: center;
    color: #efefef;
}

.doc-name {
    height: 19px;
    padding: 0 12px 0 16px;
    background-color: #efefef;
    border-top: 1px solid #999;
    border-right: 1px solid #999;
    border-top-right-radius: 3px;
    color: var(--text);
    line-height: 16px;
}

.doc-tabs .short {
    padding: 0 10px 0 14px;
}

.doc-tabs .current {
    margin-left: -14px;
    background: linear-gradient(#fff, #fff) right / 80px 100% no-repeat;
    border-right: 1px solid #999;
    border-top-right-radius: 3px;
    color: #fff;
}

.current .doc-name {
    background-color: #fff;
    border-right: none;
    border-radius: 0;
    font-weight: 700;
}

.close {
    margin-right: 5px;
}

.canvas {
    flex: 1;
    min-height: 0;
    background-color: #000;
}

/* drawing */
.drawing {
    width: 100%;
    height: 100%;
    shape-rendering: crispEdges;
}

.white {
    fill: none;
    stroke: #fff;
}

.yellow {
    fill: none;
    stroke: #ff0;
}

.red {
    fill: none;
    stroke: #f00;
}

.blue {
    stroke: #00f;
}

path.blue:not([fill]) {
    fill: none;
}

.thick {
    stroke-width: 2px;
}

.cover {
    fill: #000;
}

.label, .mark, .notes {
    font-family: "DejaVu Sans", "Noto Sans CJK SC", sans-serif;
    font-size: 13px;
}

.label {
    fill: #ff0;
    text-anchor: middle;
}

.mark {
    fill: #fff;
    font-size: 9px;
}

.notes {
    fill: #00ff3c;
    font-size: 12px;
}

.tiny {
    font-size: 8px;
    font-weight: 700;
}

.title-block {
    width: 210px;
    border-collapse: collapse;
    table-layout: fixed;
    color: #fff;
    font-size: 8px;
    font-weight: 500;
    line-height: 12px;
    text-align: center;
    white-space: nowrap;
}

.title-block td {
    height: 13px;
    border: 1px solid #fff;
}

.title-block .name {
    font-size: 10px;
}

.title-block .num {
    font-size: 11px;
}

.c18 { width: 18px; }
.c20 { width: 20px; }
.c29 { width: 29px; }
.c37 { width: 37px; }
.c40 { width: 40px; }
.c45 { width: 45px; }

/* sheet tabs */
.sheet-tabs {
    display: flex;
    flex: none;
    height: 17px;
    border-top: 1px solid #999;
}

.step {
    display: flex;
    align-items: center;
    justify-content: center;
    width: 16px;
}

.edge {
    margin-left: 1px;
}

.sheet {
    height: 16px;
    padding: 0 3px 3px;
    border-bottom: 1px solid #999;
    line-height: 12px;
}

.sheet-tabs .current {
    padding-left: 0;
    background-color: #fff;
    font-weight: 700;
}

.command-edge {
    flex: none;
    height: 10px;
    border-bottom: 4px solid var(--panel);
    background-color: #cdcdcd;
}
```
